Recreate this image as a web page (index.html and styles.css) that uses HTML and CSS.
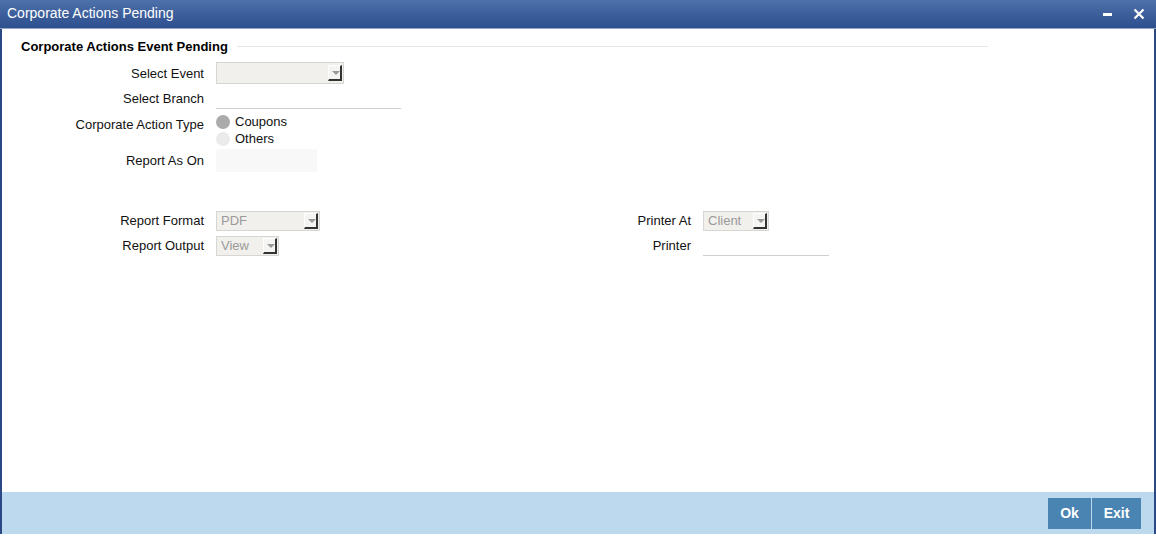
FILE: index.html
```html
<!DOCTYPE html>
<html lang="en">
<head>
    <meta charset="UTF-8">
    <title>Corporate Actions Pending</title>
    <link rel="stylesheet" href="styles.css">
</head>
<body>
<div class="window">
    <div class="titlebar">
        <span class="title">Corporate Actions Pending</span>
        <div class="win-btns">
            <svg width="12" height="12" viewBox="0 0 12 12"><rect x="1" y="5" width="9" height="3" fill="#fff"/></svg>
            <svg width="12" height="12" viewBox="0 0 12 12"><path d="M1.5 1.5 L10.5 10.5 M10.5 1.5 L1.5 10.5" stroke="#fff" stroke-width="2.2"/></svg>
        </div>
    </div>

    <div class="content">
        <div class="legend">
            <span>Corporate Actions Event Pending</span>
            <div class="legend-line"></div>
        </div>

        <div class="form">
            <div class="row">
                <label>Select Event</label>
                <div class="select w-event"><span></span><i class="arrow"></i></div>
            </div>
            <div class="row">
                <label>Select Branch</label>
                <div class="line-input w-branch"></div>
            </div>
            <div class="row radio-row">
                <label>Corporate Action Type</label>
                <div class="radios">
                    <div class="radio"><span class="dot on"></span>Coupons</div>
                    <div class="radio"><span class="dot"></span>Others</div>
                </div>
            </div>
            <div class="row date-row">
                <label>Report As On</label>
                <div class="date-input"></div>
            </div>
        </div>

        <div class="form two-col">
            <div class="col">
                <div class="row">
                    <label>Report Format</label>
                    <div class="select w-format"><span>PDF</span><i class="arrow"></i></div>
                </div>
                <div class="row">
                    <label>Report Output</label>
                    <div class="select w-output"><span>View</span><i class="arrow"></i></div>
                </div>
            </div>
            <div class="col">
                <div class="row">
                    <label>Printer At</label>
                    <div class="select w-client"><span>Client</span><i class="arrow"></i></div>
                </div>
                <div class="row">
                    <label>Printer</label>
                    <div class="line-input w-printer"></div>
                </div>
            </div>
        </div>
    </div>

    <div class="footer">
        <button class="btn">Ok</button>
        <button class="btn">Exit</button>
    </div>
</div>
</body>
</html>
```

FILE: styles.css
```css
body {
    margin: 0;
    font-family: "Liberation Sans", Arial, sans-serif;
    font-size: 13px;
    color: #000;
    background: #fff;
}
.window {
    width: 1156px;
    height: 541px;
    display: flex;
    flex-direction: column;
}
.titlebar {
    height: 28px;
    background: linear-gradient(#4d71aa, #2d4f8e);
    border-bottom: 1px solid #8fa6c4;
    display: flex;
    align-items: center;
    justify-content: space-between;
    padding: 0 11px 0 7px;
    color: #fff;
    flex-shrink: 0;
}
.title {
    font-size: 14px;
    margin-top: -2px;
}
.win-btns {
    display: flex;
    gap: 19px;
    align-items: center;
}
.content {
    flex: 1;
    border-left: 2px solid #2b4a85;
    border-right: 2px solid #2b4a85;
    padding: 8px 0 0 19px;
}
.legend {
    display: flex;
    align-items: center;
    width: 967px;
    font-weight: bold;
    height: 18px;
}
.legend-line {
    flex: 1;
    border-top: 1px solid #e6e6e6;
    margin-left: 9px;
    margin-top: 1px;
}
.form {
    margin-top: 6px;
}
.row {
    display: flex;
    align-items: center;
    min-height: 25px;
}
.row label {
    width: 183px;
    text-align: right;
    margin-right: 12px;
    color: #111;
}
.select {
    height: 20px;
    background: #f1f0ec;
    border: 1px solid #d6d6d2;
    display: flex;
    align-items: center;
    justify-content: space-between;
    color: #9a9a9a;
    box-sizing: border-box;
}
.select span {
    padding-left: 4px;
}
.arrow {
    width: 14px;
    height: 16px;
    margin-right: 1px;
    background: #f4f4f2;
    border-right: 2px solid #333;
    border-bottom: 2px solid #333;
    border-left: 1px solid #fff;
    border-top: 1px solid #fff;
    position: relative;
    box-sizing: border-box;
}
.arrow::after {
    content: "";
    position: absolute;
    left: 3px;
    top: 5px;
    border-left: 4px solid transparent;
    border-right: 4px solid transparent;
    border-top: 4px solid #9a9a9a;
}
.w-event { width: 128px; height: 22px; margin-top: -2px; }
.w-format { width: 104px; }
.w-output { width: 63px; }
.w-client { width: 66px; }
.line-input {
    height: 20px;
    border-bottom: 1px solid #d0d0d0;
    margin-top: 0;
}
.w-branch { width: 185px; }
.w-printer { width: 126px; margin-top: 0; }
.radio-row {
    align-items: flex-start;
    margin-top: 2px;
}
.radio-row label {
    padding-top: 4px;
}
.radios {
    display: flex;
    flex-direction: column;
    line-height: 17px;
}
.radio {
    display: flex;
    align-items: center;
    color: #111;
}
.dot {
    width: 14px;
    height: 14px;
    border-radius: 50%;
    background: #ebebeb;
    margin-right: 5px;
}
.dot.on {
    background: #ababab;
}
.date-row {
    margin-top: 1px;
}
.date-input {
    width: 101px;
    height: 23px;
    background: #f8f8f8;
    margin-top: -1px;
}
.two-col {
    display: flex;
    margin-top: 35px;
}
.two-col .col:first-child {
    width: 487px;
}
.footer {
    height: 42px;
    background: #bcd9ed;
    border-left: 2px solid #2b4a85;
    border-right: 2px solid #2b4a85;
    margin-bottom: 7px;
    display: flex;
    justify-content: flex-end;
    align-items: center;
    padding-right: 13px;
    gap: 1px;
    flex-shrink: 0;
}
.btn {
    height: 31px;
    background: #4a84b2;
    color: #fff;
    border: none;
    font-family: "Liberation Sans", Arial, sans-serif;
    font-size: 14px;
    font-weight: bold;
    padding: 0;
    cursor: pointer;
}
.btn:first-child { width: 43px; }
.btn:last-child { width: 49px; }
```
